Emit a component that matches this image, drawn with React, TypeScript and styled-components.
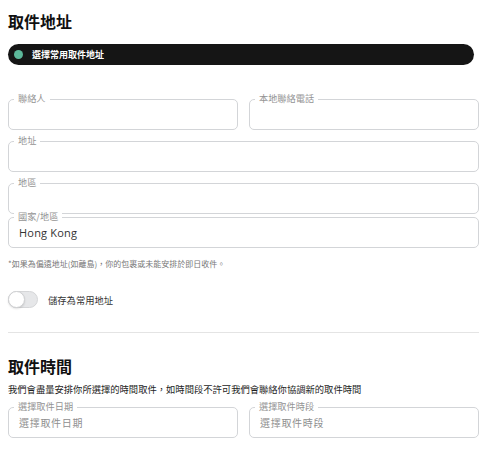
import { FC } from 'react'
import styled, { createGlobalStyle } from 'styled-components'

const Global = createGlobalStyle`
  body{
    margin: 0;
    background: #fff;
    font-family: "Noto Sans CJK TC", "Noto Sans", sans-serif;
    color: #1a1a1a;
  }
`

const Page = styled.div`
  width: 482px;
  padding: 9px 3px 0 8px;
  box-sizing: border-box;
`

const Title = styled.h2`
  margin: 0;
  font-size: 16px;
  line-height: 24px;
  font-weight: 700;
  color: #111;
`

const Pill = styled.div`
  margin-top: 11px;
  height: 21px;
  border-radius: 11px;
  background: #151515;
  display: flex;
  align-items: center;
  gap: 9px;
  padding: 0 9px 0 6px;
  width: 466px;
  box-sizing: border-box;
  span{
    color: #fff;
    font-size: 9px;
    font-weight: 700;
  }
`

const Dot = styled.i`
  width: 9px;
  height: 9px;
  border-radius: 50%;
  background: #5cb89a;
  display: block;
`

const Fields = styled.div`
  margin-top: 34px;
  display: grid;
  grid-template-columns: 1fr 1fr;
  column-gap: 11px;
  row-gap: 11px;
  width: 471px;
`

const Field = styled.div<{ $wide?: boolean; $tight?: boolean }>`
  position: relative;
  grid-column: ${p => (p.$wide ? '1 / span 2' : 'auto')};
  margin-top: ${p => (p.$tight ? '-8px' : '0')};
  padding: 0 10px;
  height: 31px;
  box-sizing: border-box;
  border: 1px solid #d3d5d8;
  border-radius: 5px;
  display: flex;
  align-items: center;
`

const Label = styled.span`
  position: absolute;
  left: 5px;
  top: -7px;
  padding: 0 4px;
  background: #fff;
  font-size: 9.2px;
  line-height: 11px;
  color: #949494;
`

const Value = styled.div<{ $muted?: boolean }>`
  font-size: ${p => (p.$muted ? '10px' : '11px')};
  line-height: 14px;
  color: ${p => (p.$muted ? '#8f8f8f' : '#333')};
  font-family: ${p => (p.$muted ? '"Noto Sans CJK TC", sans-serif' : '"Open Sans", "Noto Sans CJK TC", sans-serif')};
  letter-spacing: ${p => (p.$muted ? '0.7px' : '0.2px')};
`

const Note = styled.p`
  margin: 11px 0 0;
  font-size: 8px;
  line-height: 10px;
  color: #777;
`

const ToggleRow = styled.label`
  margin-top: 22px;
  display: flex;
  align-items: center;
  gap: 10px;
  span{
    font-size: 9.3px;
    color: #333;
  }
`

const Track = styled.div`
  position: relative;
  width: 30px;
  height: 17px;
  border-radius: 9px;
  background: #e6e7e9;
  border: 1px solid #d5d6d8;
  box-sizing: border-box;
  &::after{
    content: '';
    position: absolute;
    left: -1px;
    top: -1px;
    width: 17px;
    height: 17px;
    border-radius: 50%;
    background: #fff;
    border: 1px solid #cfd0d2;
    box-sizing: border-box;
    box-shadow: 0 1px 2px rgba(0,0,0,0.12);
  }
`

const Divider = styled.hr`
  margin: 24px 0 0;
  width: 471px;
  border: 0;
  border-top: 1px solid #e4e4e4;
`

const TimeTitle = styled(Title)`
  margin-top: 21px;
`

const Desc = styled.p`
  margin: 5px 0 0;
  font-size: 9.3px;
  line-height: 12px;
  color: #1d1d1d;
  white-space: nowrap;
`

const TimeFields = styled(Fields)`
  margin-top: 12px;
`

const App: FC = () => {
  return (
    <Page>
      <Global />
      <Title>取件地址</Title>
      <Pill>
        <Dot />
        <span>選擇常用取件地址</span>
      </Pill>
      <Fields>
        <Field>
          <Label>聯絡人</Label>
        </Field>
        <Field>
          <Label>本地聯絡電話</Label>
        </Field>
        <Field $wide>
          <Label>地址</Label>
        </Field>
        <Field $wide>
          <Label>地區</Label>
        </Field>
        <Field $wide $tight>
          <Label>國家/地區</Label>
          <Value>Hong Kong</Value>
        </Field>
      </Fields>
      <Note>*如果為偏遠地址(如離島)，你的包裹或未能安排於即日收件。</Note>
      <ToggleRow>
        <Track />
        <span>儲存為常用地址</span>
      </ToggleRow>
      <Divider />
      <TimeTitle>取件時間</TimeTitle>
      <Desc>我們會盡量安排你所選擇的時間取件，如時間段不許可我們會聯絡你協調新的取件時間</Desc>
      <TimeFields>
        <Field>
          <Label>選擇取件日期</Label>
          <Value $muted>選擇取件日期</Value>
        </Field>
        <Field>
          <Label>選擇取件時段</Label>
          <Value $muted>選擇取件時段</Value>
        </Field>
      </TimeFields>
    </Page>
  )
}

export default App
